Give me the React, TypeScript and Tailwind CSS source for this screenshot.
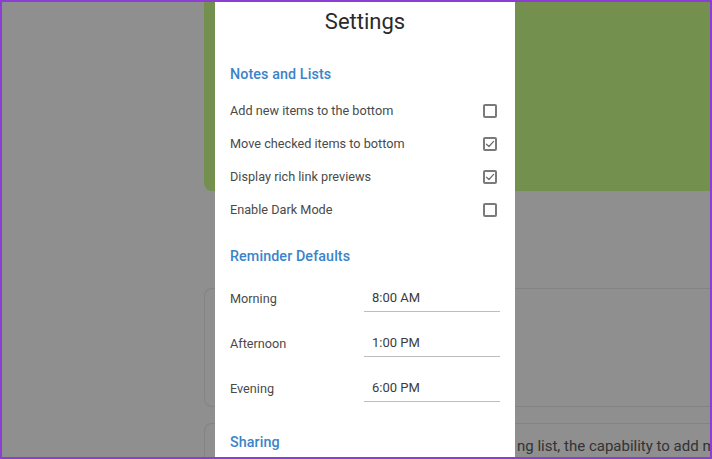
import React from "react";

function Checkbox({ checked }: { checked: boolean }) {
  return (
    <div className="w-[14px] h-[14px] border-2 border-[#7a7a7a] rounded-[2px] flex items-center justify-center">
      {checked && (
        <svg width="10" height="10" viewBox="0 0 10 10" fill="none">
          <path d="M1.5 5.2 L4 7.5 L8.6 2.4" stroke="#6e6e6e" strokeWidth="1.3" strokeLinecap="round" strokeLinejoin="round" />
        </svg>
      )}
    </div>
  );
}

function SectionHeading({ children, className }: { children: React.ReactNode; className: string }) {
  return (
    <div className={"h-[18px] flex items-center text-[14.3px] font-medium text-[#3b83c9] tracking-[0.1px] " + className}>
      {children}
    </div>
  );
}

function CheckRow({ label, checked }: { label: string; checked: boolean }) {
  return (
    <div className="h-[33px] flex items-center justify-between pr-[3px]">
      <span className="text-[12.7px] text-[#4a4a4a]">{label}</span>
      <Checkbox checked={checked} />
    </div>
  );
}

function TimeRow({ label, value }: { label: string; value: string }) {
  return (
    <div className="h-[45px] flex items-center justify-between">
      <span className="text-[12.7px] text-[#4a4a4a]">{label}</span>
      <div className="w-[136px] h-[26px] border-b border-[#bdbdbd] flex items-center pl-[8px] text-[13px] text-[#3c3c3c]">
        {value}
      </div>
    </div>
  );
}

export default function App() {
  return (
    <div
      className="relative w-[712px] h-[459px] overflow-hidden border-2 border-[#8b3fd2] bg-[#8f8f8f]"
      style={{ fontFamily: "Roboto, 'Liberation Sans', sans-serif" }}
    >
      {/* background app content (dimmed) */}
      <div className="flex flex-col pl-[202px] -mt-[20px]">
        <div className="h-[209px] bg-[#74904f] rounded-bl-[8px] rounded-tl-[8px]" />
        <div className="h-[119px] mt-[97px] border border-[#838383] border-r-0 rounded-l-[8px]" />
        <div className="h-[60px] mt-[16px] border border-[#838383] border-r-0 rounded-l-[8px] pl-[312px] pt-[11px]">
          <div className="whitespace-nowrap text-[15px] text-[#333333]">
            ng list, the capability to add multiple items
          </div>
        </div>
      </div>

      {/* settings dialog */}
      <div className="absolute top-[-2px] left-[213px] w-[300px] h-[461px] bg-white px-[15px]">
        <div className="h-[42px] flex items-center justify-center text-[22px] text-[#2a2a2a]">
          Settings
        </div>
        <SectionHeading className="mt-[24px]">Notes and Lists</SectionHeading>
        <div className="mt-[10px]">
          <CheckRow label="Add new items to the bottom" checked={false} />
          <CheckRow label="Move checked items to bottom" checked={true} />
          <CheckRow label="Display rich link previews" checked={true} />
          <CheckRow label="Enable Dark Mode" checked={false} />
        </div>
        <SectionHeading className="mt-[22px]">Reminder Defaults</SectionHeading>
        <div className="mt-[10px]">
          <TimeRow label="Morning" value="8:00 AM" />
          <TimeRow label="Afternoon" value="1:00 PM" />
          <TimeRow label="Evening" value="6:00 PM" />
        </div>
        <SectionHeading className="mt-[23px]">Sharing</SectionHeading>
      </div>
    </div>
  );
}
